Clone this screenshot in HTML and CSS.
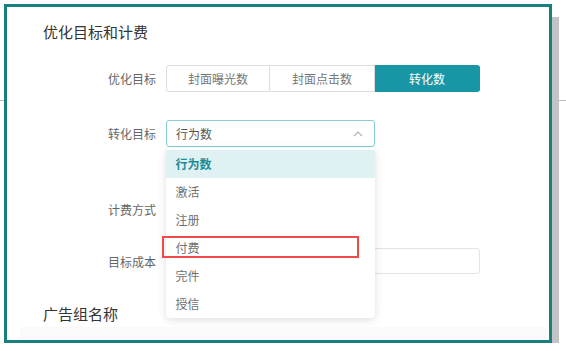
FILE: index.html
```html
<!DOCTYPE html>
<html lang="zh-CN">
<head>
  <meta charset="UTF-8">
  <title>优化目标和计费</title>
  <link rel="stylesheet" href="styles.css">
</head>
<body>
  <div class="frame">
    <h2 class="section-title">优化目标和计费</h2>

    <div class="form-row row-goal">
      <label class="form-label">优化目标</label>
      <div class="segmented">
        <button class="seg">封面曝光数</button>
        <button class="seg">封面点击数</button>
        <button class="seg active">转化数</button>
      </div>
    </div>

    <div class="form-row row-convert">
      <label class="form-label">转化目标</label>
      <div class="select open">
        <span class="select-value">行为数</span>
        <svg class="caret" width="10" height="6" viewBox="0 0 10 6">
          <polyline points="1,5 5,1 9,5" fill="none" stroke="#b5b5b5" stroke-width="1.2"/>
        </svg>
        <ul class="dropdown">
          <li class="option selected">行为数</li>
          <li class="option">激活</li>
          <li class="option">注册</li>
          <li class="option">付费<span class="mark"></span></li>
          <li class="option">完件</li>
          <li class="option">授信</li>
        </ul>
      </div>
    </div>

    <div class="form-row row-bill">
      <label class="form-label">计费方式</label>
    </div>

    <div class="form-row row-cost">
      <label class="form-label">目标成本</label>
      <input class="text-input" type="text">
    </div>

    <h2 class="section-title title-group">广告组名称</h2>
    <div class="next-band"></div>
  </div>
</body>
</html>
```

FILE: styles.css
```css
:root {
  --teal: #17807f;
  --primary: #1896a6;
  --label: #666666;
  --text: #555555;
  --border: #dddddd;
}

body {
  margin: 0;
  padding: 4px 0 0 4px;
  font-family: "Noto Sans CJK SC", "Noto Sans", sans-serif;
  background: #ffffff linear-gradient(#bdbdbd, #bdbdbd) 0 100px / 100% 1px no-repeat;
}

.frame {
  box-sizing: border-box;
  width: 548px;
  height: 339px;
  border: 3px solid var(--teal);
  background-color: #ffffff;
  box-shadow: 10px 10px 0 -3px #c3c3c3;
  padding: 14px 0 0 36px;
  display: flex;
  flex-direction: column;
}

.section-title {
  margin: 0;
  font-size: 15px;
  line-height: 22px;
  font-weight: 400;
  color: #333333;
}

.form-row {
  display: flex;
  align-items: center;
  gap: 10px;
  height: 27px;
  padding-left: 17px;
}

.row-goal { margin-top: 22px; }
.row-convert { margin-top: 28px; }
.row-bill { margin-top: 49px; }
.row-cost { margin-top: 25px; height: 26px; }

.form-label {
  width: 96px;
  text-align: right;
  font-size: 12px;
  color: var(--label);
}

.segmented {
  display: flex;
  height: 27px;
}

.seg {
  box-sizing: border-box;
  width: 105px;
  height: 27px;
  margin: 0;
  padding: 0;
  border: 1px solid var(--border);
  border-left: none;
  background-color: #ffffff;
  font-family: inherit;
  font-size: 12px;
  color: #777777;
}

.seg:first-child {
  width: 104px;
  border-left: 1px solid var(--border);
  border-radius: 3px 0 0 3px;
}

.seg.active {
  background-color: var(--primary);
  border-color: var(--primary);
  color: #ffffff;
  border-radius: 0 3px 3px 0;
}

.select {
  position: relative;
  box-sizing: border-box;
  width: 209px;
  height: 27px;
  border: 1.5px solid #86cfd7;
  border-radius: 3px;
  display: flex;
  align-items: center;
  justify-content: space-between;
  padding: 0 11px 0 9px;
}

.select-value {
  font-size: 12px;
  color: var(--text);
}

.dropdown {
  position: absolute;
  top: 27px;
  left: -1.5px;
  width: 209px;
  margin: 0;
  padding: 2px 0 0;
  list-style: none;
  background-color: #ffffff;
  border-radius: 4px;
  box-shadow: 0 2px 8px rgba(0, 0, 0, 0.13);
  z-index: 2;
}

.option {
  position: relative;
  height: 28px;
  line-height: 28px;
  padding-left: 10px;
  font-size: 12px;
  color: #707070;
}

.option.selected {
  background-color: #dff1f3;
  color: #1a8d9a;
  font-weight: 700;
}

.mark {
  position: absolute;
  top: 2px;
  left: -4px;
  box-sizing: border-box;
  width: 197px;
  height: 22px;
  border: 2px solid #ef4b4b;
}

.text-input {
  box-sizing: border-box;
  width: 314px;
  height: 26px;
  border: 1px solid #e4e4e4;
  border-radius: 3px;
  background-color: #ffffff;
}

.title-group {
  margin-top: 29px;
}

.next-band {
  flex: 1;
  margin: 2px 3px 0 -23px;
  background-color: #fafafa;
}
```
